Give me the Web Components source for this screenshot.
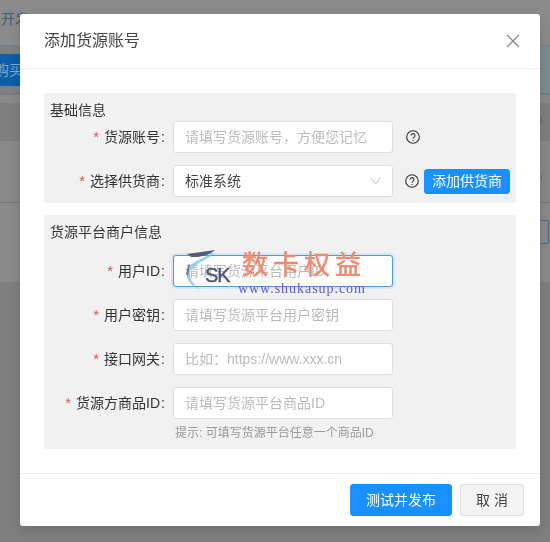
<!DOCTYPE html>
<html lang="zh">
<head>
<meta charset="utf-8">
<title>添加货源账号</title>
<style>
  html, body { margin: 0; height: 100%; overflow: hidden; background: #858585; }
  body { font: 14px/20px "Liberation Sans", "Noto Sans CJK SC", sans-serif; color: #333; }
</style>
</head>
<body>
<page-backdrop></page-backdrop>
<modal-dialog heading="添加货源账号">
  <form-section heading="基础信息" style="--title-gap:1px">
    <form-row label="货源账号">
      <text-field>请填写货源账号，方便您记忆</text-field>
      <help-icon style="margin-left:13px"></help-icon>
    </form-row>
    <form-row label="选择供货商">
      <text-field select value>标准系统</text-field>
      <help-icon style="margin-left:12px"></help-icon>
      <ui-button small primary style="margin-left:5px">添加供货商</ui-button>
    </form-row>
  </form-section>
  <form-section heading="货源平台商户信息" style="--title-gap:13px;margin-top:12px">
    <form-row label="用户ID">
      <text-field focused>请填写货源平台用户ID</text-field>
    </form-row>
    <form-row label="用户密钥">
      <text-field>请填写货源平台用户密钥</text-field>
    </form-row>
    <form-row label="接口网关">
      <text-field>比如：https://www.xxx.cn</text-field>
    </form-row>
    <form-row label="货源方商品ID">
      <text-field>请填写货源平台商品ID</text-field>
    </form-row>
    <form-hint>提示: 可填写货源平台任意一个商品ID</form-hint>
  </form-section>
  <ui-button slot="footer" primary style="width:102px">测试并发布</ui-button>
  <ui-button slot="footer" style="width:64px">取 消</ui-button>
</modal-dialog>
<site-watermark></site-watermark>

<script>
// the dimmed page behind the dialog, only its edges show
class PageBackdrop extends HTMLElement {
  constructor() {
    super();
    this.attachShadow({ mode: "open" });
    this.shadowRoot.innerHTML = `
      <style>
        :host { display: block; height: 100vh; overflow: hidden; background: #858585; }
        .row { box-sizing: border-box; position: relative; }
        .top { height: 45px; background: #8b8b8b; color: #3d5a7c; font-size: 14px; line-height: 38px; }
        .top span { margin-left: 1px; }
        .bar { height: 50px; background: linear-gradient(90deg, #808080 0, #808080 90%, #7d8b8f 90%);
               border-top: 1px solid #72838f; border-bottom: 2px solid #6e7f8c; padding-top: 8px; }
        .buy { width: 60px; height: 32px; margin-left: -20px; padding-left: 15px; background: #0e5ea8;
               color: #7fa8cc; line-height: 32px; box-sizing: border-box; white-space: nowrap; }
        .gap { height: 8px; background: #8a8a8a; }
        .dark { height: 38px; background: #7f7f7f; }
        .plain { height: 62px; background: #898989; border-bottom: 1px solid #777; }
        .plain2 { height: 79px; background: #8a8a8a; }
        .dots { position: absolute; left: 541px; width: 1px; height: 7px;
                border-left: 1px dotted #555; }
        .box { position: absolute; left: 540px; top: 17px; width: 8px; height: 22px;
               border: 1px solid #3f6d99; border-left: 0; border-radius: 0 2px 2px 0; }
        .rest { height: 260px; background: #7f7f7f; }
      </style>
      <div class="row top"><span>开发</span></div>
      <div class="row bar"><div class="buy">购买</div></div>
      <div class="row gap"></div>
      <div class="row dark"><div class="dots" style="top:14px"></div></div>
      <div class="row plain"><div class="dots" style="top:33px"></div></div>
      <div class="row plain2"><div class="box"></div></div>
      <div class="row rest"></div>
    `;
  }
}

class ModalDialog extends HTMLElement {
  constructor() {
    super();
    this.attachShadow({ mode: "open" });
    this.shadowRoot.innerHTML = `
      <style>
        :host { position: fixed; left: 20px; top: 14px; width: 520px; height: 512px; display: flex;
                flex-direction: column; box-sizing: border-box; background: #fff; border-radius: 3px;
                box-shadow: 0 4px 12px rgba(0,0,0,.15); }
        header { flex: none; box-sizing: border-box; height: 55px; display: flex; align-items: center;
                 justify-content: space-between; padding: 0 20px 0 24px; border-bottom: 1px solid #eee; }
        h1 { margin: 0; font-size: 16px; font-weight: 400; color: #444; }
        svg { display: block; }
        main { flex: 1; padding: 24px 24px 0; }
        footer { flex: none; box-sizing: border-box; height: 53px; display: flex; justify-content: flex-end;
                 gap: 8px; padding: 10px 16px 0 0; border-top: 1px solid #eee; }
      </style>
      <header>
        <h1></h1>
        <svg width="14" height="14" viewBox="0 0 14 14" fill="none" stroke="#888" stroke-width="1.3">
          <path d="M1 1l12 12M13 1L1 13"/>
        </svg>
      </header>
      <main><slot></slot></main>
      <footer><slot name="footer"></slot></footer>
    `;
  }
  connectedCallback() {
    this.shadowRoot.querySelector("h1").textContent = this.getAttribute("heading");
  }
}

class FormSection extends HTMLElement {
  constructor() {
    super();
    this.attachShadow({ mode: "open" });
    this.shadowRoot.innerHTML = `
      <style>
        :host { display: block; background: #f1f1f1; border-radius: 2px; padding: 7px 0 6px; }
        .title { padding-left: 6px; margin-bottom: var(--title-gap, 1px); line-height: 20px; color: #333; }
        .rows { display: flex; flex-direction: column; gap: 12px; }
      </style>
      <div class="title"></div>
      <div class="rows"><slot></slot></div>
    `;
  }
  connectedCallback() {
    this.shadowRoot.querySelector(".title").textContent = this.getAttribute("heading");
  }
}

class FormRow extends HTMLElement {
  constructor() {
    super();
    this.attachShadow({ mode: "open" });
    this.shadowRoot.innerHTML = `
      <style>
        :host { display: flex; align-items: center; height: 32px; }
        label { flex: none; width: 121px; text-align: right; color: #333; white-space: nowrap; }
        i { font-style: normal; color: #d9534f; margin-right: 5px; font-size: 15px; }
        span { margin-right: 1px; }
        .ctl { display: flex; align-items: center; margin-left: 8px; }
      </style>
      <label><i>*</i><span></span>:</label>
      <div class="ctl"><slot></slot></div>
    `;
  }
  connectedCallback() {
    this.shadowRoot.querySelector("span").textContent = this.getAttribute("label");
  }
}

class TextField extends HTMLElement {
  constructor() {
    super();
    this.attachShadow({ mode: "open" });
    this.shadowRoot.innerHTML = `
      <style>
        :host { box-sizing: border-box; display: flex; align-items: center; justify-content: space-between;
                width: 220px; height: 32px; padding: 0 11px; background: #fff; border: 1px solid #dcdee2;
                border-radius: 3px; color: #bbb; white-space: nowrap; overflow: hidden; }
        :host([value]) { color: #444; }
        :host([focused]) { border-color: #4f9cc9; box-shadow: 0 0 0 2px rgba(45,140,240,.1); }
        svg { display: none; flex: none; }
        :host([select]) svg { display: block; }
      </style>
      <span><slot></slot></span>
      <svg width="11" height="8" viewBox="0 0 11 8" fill="none" stroke="#c5c5c5"><path d="M.5 .5l5 6.5 5-6.5"/></svg>
    `;
  }
}

class HelpIcon extends HTMLElement {
  constructor() {
    super();
    this.attachShadow({ mode: "open" });
    this.shadowRoot.innerHTML = `
      <style>
        :host { display: block; width: 14px; height: 14px; flex: none; }
        svg { display: block; }
      </style>
      <svg width="14" height="14" viewBox="0 0 14 14" fill="none" stroke="#333" stroke-width="1.1">
        <circle cx="7" cy="7" r="6.3"/>
        <path d="M5.1 5.6a1.9 1.9 0 1 1 3 1.5c-.7.5-1.1.8-1.1 1.6"/>
        <path d="M7 10v1" stroke-width="1.2"/>
      </svg>
    `;
  }
}

class UiButton extends HTMLElement {
  constructor() {
    super();
    this.attachShadow({ mode: "open" });
    this.shadowRoot.innerHTML = `
      <style>
        :host { box-sizing: border-box; display: inline-flex; align-items: center; justify-content: center;
                height: 32px; border: 1px solid #dcdee2; border-radius: 3px; background: #f3f3f3;
                color: #444; white-space: nowrap; }
        :host([primary]) { background: #1890ff; border-color: #1890ff; color: #fff; }
        :host([small]) { width: 86px; height: 25px; }
      </style>
      <slot></slot>
    `;
  }
}

class FormHint extends HTMLElement {
  constructor() {
    super();
    this.attachShadow({ mode: "open" });
    this.shadowRoot.innerHTML = `
      <style>
        :host { display: block; margin: -8px 0 0 131px; font-size: 12px; line-height: 20px; color: #999; }
      </style>
      <slot></slot>
    `;
  }
}

// site stamp pasted over the screenshot
class SiteWatermark extends HTMLElement {
  constructor() {
    super();
    this.attachShadow({ mode: "open" });
    this.shadowRoot.innerHTML = `
      <style>
        :host { position: fixed; left: 183px; top: 248px; width: 190px; height: 50px; pointer-events: none; }
        svg { position: absolute; left: 0; top: 0; }
        .sk { position: absolute; left: 22px; top: 16px; font: 400 20px/22px "Liberation Sans", sans-serif;
              color: #4d5278; letter-spacing: -1px; -webkit-text-stroke: .4px #4d5278; }
        .cn { position: absolute; left: 59px; top: 0; font: 400 26px/30px "Noto Sans CJK SC", sans-serif;
              color: #ef8a70; letter-spacing: 5px; white-space: nowrap; -webkit-text-stroke: .5px #ef8a70; }
        .url { position: absolute; left: 55px; top: 33px; font: 14px/16px "Liberation Serif", serif;
               color: #5c5cc6; letter-spacing: .95px; white-space: nowrap; }
      </style>
      <svg width="40" height="44" viewBox="0 0 40 44">
        <path d="M4 6 L32 2 C28 6 22 8 14 9 L8 9 Z" fill="#555a7e"/>
        <path d="M32 4 C26 12 14 14 8 22 C5 28 9 36 17 42 C7 38 2 30 4 22 C6 15 20 10 32 4 Z" fill="#7cc4ea" opacity=".75"/>
        <path d="M5 17 L7 16 L5 27 L3 27 Z" fill="#555a7e" opacity=".8"/>
      </svg>
      <div class="sk">SK</div>
      <div class="cn">数卡权益</div>
      <div class="url">www.shukasup.com</div>
    `;
  }
}

customElements.define("page-backdrop", PageBackdrop);
customElements.define("modal-dialog", ModalDialog);
customElements.define("form-section", FormSection);
customElements.define("form-row", FormRow);
customElements.define("text-field", TextField);
customElements.define("help-icon", HelpIcon);
customElements.define("ui-button", UiButton);
customElements.define("form-hint", FormHint);
customElements.define("site-watermark", SiteWatermark);
</script>
</body>
</html>
